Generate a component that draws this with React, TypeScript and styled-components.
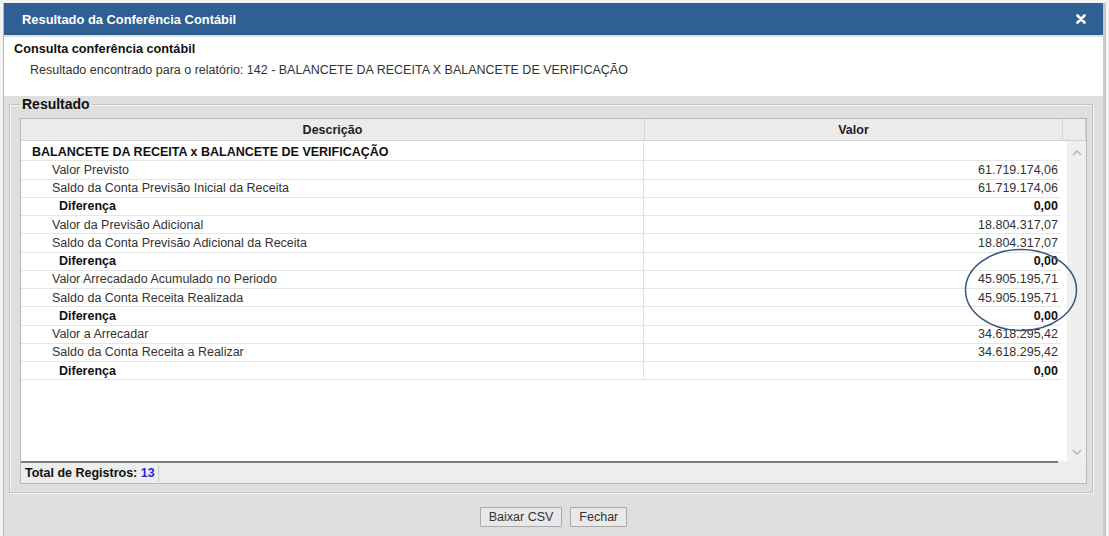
import React from 'react';
import styled, { createGlobalStyle } from 'styled-components';

const GlobalStyle = createGlobalStyle`
  html, body {
    margin: 0;
    padding: 0;
    background: #f3f3f3;
  }
  body {
    font-family: 'Liberation Sans', Arial, sans-serif;
    font-size: 12.5px;
    color: #222;
  }
`;

const Page = styled.div`
  position: relative;
  width: 1109px;
  height: 536px;
  overflow: hidden;
  padding: 3px 0 0 3px;
  box-sizing: border-box;
`;

const Dialog = styled.div`
  width: 1103px;
  height: 533px;
  box-sizing: border-box;
  background: #e0dfdd;
  border-left: 1px solid #b9b9b9;
  border-right: 3px solid #c9c9c9;
  display: flex;
  flex-direction: column;
`;

const TitleBar = styled.div`
  height: 32px;
  background: #305f93;
  display: flex;
  align-items: center;
  justify-content: space-between;
  padding: 0 17px 0 18px;
  color: #fff;
  font-weight: bold;
  font-size: 12.9px;
`;

const CloseButton = styled.div`
  width: 10px;
  height: 10px;
  display: flex;
  cursor: pointer;
`;

const InfoPanel = styled.div`
  margin-top: 2px;
  height: 59px;
  background: #fff;
  padding: 5px 0 0 10px;
  box-sizing: border-box;
`;

const InfoTitle = styled.div`
  font-weight: bold;
  font-size: 12.7px;
  color: #111;
  line-height: 15px;
`;

const InfoText = styled.div`
  margin: 6px 0 0 16px;
  color: #333;
  line-height: 15px;
`;

const ResultFieldset = styled.fieldset`
  margin: 1px 10px 0 5px;
  padding: 6px 7px 8px 10px;
  border: 1px solid #c2c2c2;
  box-shadow: inset 1px 1px 0 #f4f4f4, 1px 1px 0 #f4f4f4;
  min-width: 0;
`;

const Legend = styled.legend`
  margin-left: 0;
  padding: 0 2px 0 2px;
  font-weight: bold;
  font-size: 14px;
  color: #111;
  line-height: 15px;
`;

const Grid = styled.div`
  width: 1065px;
  border: 1px solid #b8b8b8;
  background: #fff;
  display: flex;
  flex-direction: column;
`;

const HeaderRow = styled.div`
  display: flex;
  height: 21px;
  background: #ebebec;
  border-bottom: 1px solid #d2d2d2;
`;

const HeadCell = styled.div<{ $w: number }>`
  width: ${(p) => p.$w}px;
  flex: none;
  border-right: 1px solid #d4d4d4;
  display: flex;
  align-items: center;
  justify-content: center;
  font-weight: bold;
  color: #222;
`;

const HeadFiller = styled.div`
  flex: 1;
  border-right: 1px solid #d4d4d4;
`;

const Body = styled.div`
  display: flex;
  height: 320px;
`;

const Rows = styled.div`
  width: 1046px;
  flex: none;
  padding-top: 2px;
`;

const Row = styled.div`
  display: flex;
  width: 1040px;
  height: 18.25px;
  box-sizing: border-box;
  border-bottom: 1px solid #e6e6e6;
`;

const DescCell = styled.div<{ $indent: number; $bold?: boolean }>`
  width: 623px;
  flex: none;
  box-sizing: border-box;
  border-right: 1px solid #e2e2e2;
  padding-left: ${(p) => p.$indent}px;
  display: flex;
  align-items: center;
  font-weight: ${(p) => (p.$bold ? 'bold' : 'normal')};
  color: ${(p) => (p.$bold ? '#111' : '#333')};
`;

const ValueCell = styled.div<{ $bold?: boolean }>`
  flex: 1;
  display: flex;
  align-items: center;
  justify-content: flex-end;
  padding-right: 3px;
  font-weight: ${(p) => (p.$bold ? 'bold' : 'normal')};
  color: ${(p) => (p.$bold ? '#111' : '#333')};
`;

const ScrollTrack = styled.div`
  flex: 1;
  background: #efefef;
  display: flex;
  flex-direction: column;
  justify-content: space-between;
  align-items: center;
  padding: 9px 0 6px;
`;

const Footer = styled.div`
  display: flex;
  height: 22px;
  background: #ededed;
`;

const FooterMain = styled.div`
  width: 1037px;
  flex: none;
  border-top: 2px solid #7c7c7c;
  display: flex;
  align-items: center;
  padding-left: 4px;
  box-sizing: border-box;
`;

const FooterLabel = styled.span`
  font-weight: bold;
  color: #111;
  padding-right: 3px;
  border-right: 1px solid #c8c8c8;
  line-height: 17px;
`;

const FooterCount = styled.span`
  color: #2525e0;
`;

const ButtonBar = styled.div`
  display: flex;
  justify-content: center;
  gap: 8px;
  margin-top: 14px;
`;

const Button = styled.button`
  height: 20px;
  padding: 0 8px;
  border: 1px solid #a9a9a9;
  background: #e9e9e9;
  font-family: 'Liberation Sans', Arial, sans-serif;
  font-size: 12.5px;
  color: #333;
  border-radius: 1px;
`;

const Annotation = styled.svg`
  position: absolute;
  left: 960px;
  top: 244px;
  pointer-events: none;
`;

type Line = { desc: string; value: string; kind: 'group' | 'item' | 'diff' };

const lines: Line[] = [
  { desc: 'BALANCETE DA RECEITA x BALANCETE DE VERIFICAÇÃO', value: '', kind: 'group' },
  { desc: 'Valor Previsto', value: '61.719.174,06', kind: 'item' },
  { desc: 'Saldo da Conta Previsão Inicial da Receita', value: '61.719.174,06', kind: 'item' },
  { desc: 'Diferença', value: '0,00', kind: 'diff' },
  { desc: 'Valor da Previsão Adicional', value: '18.804.317,07', kind: 'item' },
  { desc: 'Saldo da Conta Previsão Adicional da Receita', value: '18.804.317,07', kind: 'item' },
  { desc: 'Diferença', value: '0,00', kind: 'diff' },
  { desc: 'Valor Arrecadado Acumulado no Periodo', value: '45.905.195,71', kind: 'item' },
  { desc: 'Saldo da Conta Receita Realizada', value: '45.905.195,71', kind: 'item' },
  { desc: 'Diferença', value: '0,00', kind: 'diff' },
  { desc: 'Valor a Arrecadar', value: '34.618.295,42', kind: 'item' },
  { desc: 'Saldo da Conta Receita a Realizar', value: '34.618.295,42', kind: 'item' },
  { desc: 'Diferença', value: '0,00', kind: 'diff' },
];

const indentFor = { group: 11, item: 31, diff: 38 };

const Chevron = ({ up }: { up?: boolean }) => (
  <svg width="10" height="6" viewBox="0 0 10 6">
    <path
      d={up ? 'M1 5 L5 1 L9 5' : 'M1 1 L5 5 L9 1'}
      fill="none"
      stroke="#b4b4b4"
      strokeWidth="1.4"
    />
  </svg>
);

const App = () => {
  return (
    <Page>
      <GlobalStyle />
      <Dialog>
        <TitleBar>
          <span>Resultado da Conferência Contábil</span>
          <CloseButton>
            <svg width="10" height="10" viewBox="0 0 10 10">
              <path d="M1.5 1.5 L8.5 8.5 M8.5 1.5 L1.5 8.5" stroke="#fff" strokeWidth="2.6" strokeLinecap="round" />
            </svg>
          </CloseButton>
        </TitleBar>
        <InfoPanel>
          <InfoTitle>Consulta conferência contábil</InfoTitle>
          <InfoText>Resultado encontrado para o relatório: 142 - BALANCETE DA RECEITA X BALANCETE DE VERIFICAÇÃO</InfoText>
        </InfoPanel>
        <ResultFieldset>
          <Legend>Resultado</Legend>
          <Grid>
            <HeaderRow>
              <HeadCell $w={623}>Descrição</HeadCell>
              <HeadCell $w={417}>Valor</HeadCell>
              <HeadFiller />
            </HeaderRow>
            <Body>
              <Rows>
                {lines.map((line, i) => (
                  <Row key={i}>
                    <DescCell $indent={indentFor[line.kind]} $bold={line.kind !== 'item'}>
                      {line.desc}
                    </DescCell>
                    <ValueCell $bold={line.kind === 'diff'}>{line.value}</ValueCell>
                  </Row>
                ))}
              </Rows>
              <ScrollTrack>
                <Chevron up />
                <Chevron />
              </ScrollTrack>
            </Body>
            <Footer>
              <FooterMain>
                <FooterLabel>
                  Total de Registros: <FooterCount>13</FooterCount>
                </FooterLabel>
              </FooterMain>
            </Footer>
          </Grid>
        </ResultFieldset>
        <ButtonBar>
          <Button>Baixar CSV</Button>
          <Button>Fechar</Button>
        </ButtonBar>
      </Dialog>
      <Annotation width="124" height="92" viewBox="0 0 124 92">
        <ellipse cx="61" cy="46" rx="55.5" ry="40.5" fill="none" stroke="#3b5878" strokeWidth="1.5" />
      </Annotation>
    </Page>
  );
};

export default App;
